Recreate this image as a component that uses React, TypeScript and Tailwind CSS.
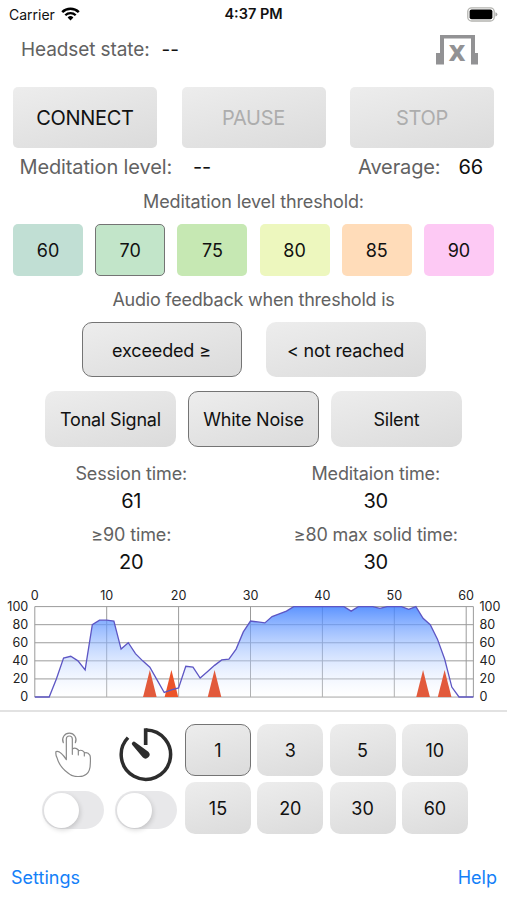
import React, { useState } from "react"
import clsx from "clsx"

const thresholds = [
  { value: 60, color: "bg-[#c1dfd4]" },
  { value: 70, color: "bg-[#c2e5c9]" },
  { value: 75, color: "bg-[#c6e8b3]" },
  { value: 80, color: "bg-[#edf7be]" },
  { value: 85, color: "bg-[#ffdcb9]" },
  { value: 90, color: "bg-[#fdc9f4]" },
]

const levels = [
  0, 0, 0, 20, 43, 45, 40, 30, 80, 85, 85, 84, 53, 60, 48, 40, 33, 19, 5, 8, 10,
  34, 33, 21, 28, 35, 41, 42, 53, 72, 84, 83, 82, 89, 92, 95, 100, 100, 100,
  100, 100, 100, 100, 100, 95, 100, 100, 100, 98, 100, 100, 100, 97, 100, 87,
  80, 64, 42, 11, 0, 0, 0,
]

const markers = [16, 19, 25, 54, 57]

const silver = "bg-linear-165 from-[#ededed] to-[#dbdbdb]"

function WifiIcon() {
  return (
    <svg width="19" height="14" viewBox="0 0 19 14" fill="none" stroke="#000">
      <path d="M1.2 5.2a11.8 11.8 0 0 1 16.6 0" strokeWidth="2.5" />
      <path d="M4.3 8.3a7.4 7.4 0 0 1 10.4 0" strokeWidth="2.3" />
      <path d="M9.5 13.4 6.6 10.5a4.2 4.2 0 0 1 5.8 0z" fill="#000" stroke="none" />
    </svg>
  )
}

function BatteryIcon() {
  return (
    <svg width="31" height="15" viewBox="0 0 31 15">
      <rect x="0.8" y="0.8" width="26.4" height="13.2" rx="3.8" fill="none" stroke="#b4b4b0" strokeWidth="1.3" />
      <rect x="2.6" y="2.6" width="22.8" height="9.6" rx="2" />
      <path d="M28.4 5.2q2 .6 2 2.2t-2 2.2z" fill="#aaa" />
    </svg>
  )
}

function HeadsetIcon() {
  return (
    <svg width="42" height="30" viewBox="0 0 42 30" fill="#929294" className="overflow-visible">
      <path d="M4 0h35v18h3v11.5h-7V3.6H8v25.9H0V18h4z" />
      <text
        x="21"
        y="26.2"
        textAnchor="middle"
        fontFamily="DejaVu Sans"
        fontWeight="bold"
        fontSize="28"
        textLength="17"
        lengthAdjust="spacingAndGlyphs"
      >
        x
      </text>
    </svg>
  )
}

function TapIcon() {
  return (
    <svg width="38" height="46" viewBox="0 0 114 138" fill="none" stroke="#8a8a8a" strokeWidth="3.6" strokeLinecap="round" strokeLinejoin="round">
      <path d="M25 35a20 20 0 1 1 36 0" />
      <path d="M34 74V24a9 9 0 0 1 18 0v46V54q9-7 18 3v15V60q10-6 18 4v11V66q10-4 17 7 2 6 1 23 0 25-12 34-10 8-26 7Q50 136 39 126 13 107 6 80 1 70 3 62q12-5 31 24V70" />
    </svg>
  )
}

function TimerIcon() {
  return (
    <svg width="54" height="55" viewBox="0 0 162 165" fill="none" stroke="#2d2d2d">
      <path d="M80 9a74 74 0 1 1-53 23" strokeWidth="10.5" />
      <path d="M80 4v50" strokeWidth="11" />
      <path d="M40 54a6 6 0 0 1 9-8l39 28a12 12 0 1 1-17 17z" fill="#2d2d2d" stroke="none" />
    </svg>
  )
}

function LevelChart() {
  const left = 34.8
  const top = 26.6
  const bottom = 117
  const px = (i: number) => left + i * 7.19
  const py = (v: number) => bottom - v * 0.904
  const line = levels.map((v, i) => `${px(i)},${py(v)}`).join(" ")

  return (
    <svg width="507" height="130" viewBox="0 0 507 130" fontSize="12.6" fill="#222" className="block">
      <defs>
        <linearGradient id="level" x1="0" y1={top} x2="0" y2={bottom} gradientUnits="userSpaceOnUse">
          <stop offset="0" stopColor="#3f80ff" stopOpacity="0.84" />
          <stop offset="1" stopColor="#ffffff" stopOpacity="0.2" />
        </linearGradient>
      </defs>
      <g stroke="#9b9b9b">
        {[0, 20, 40, 60, 80, 100].map((v) => (
          <line key={v} x1={left} x2={px(61)} y1={py(v)} y2={py(v)} />
        ))}
        {[0, 10, 20, 30, 40, 50, 60, 61].map((t) => (
          <line key={t} x1={px(t)} x2={px(t)} y1={top} y2={bottom} />
        ))}
      </g>
      <polygon points={`${left},${bottom} ${line}`} fill="url(#level)" />
      {markers.map((t) => (
        <polygon
          key={t}
          points={`${px(t) - 6.8},${bottom} ${px(t)},${py(30)} ${px(t) + 6.8},${bottom}`}
          fill={t === 19 ? "#ec5429" : "#e25a3c"}
        />
      ))}
      <polyline points={line} fill="none" stroke="#5d56c4" strokeWidth="1.3" />
      {[0, 10, 20, 30, 40, 50, 60].map((t) => (
        <text key={t} x={px(t)} y="19.5" textAnchor="middle">
          {t}
        </text>
      ))}
      {[0, 20, 40, 60, 80, 100].map((v) => (
        <React.Fragment key={v}>
          <text x="28.3" y={py(v) + 4} textAnchor="end">
            {v}
          </text>
          <text x="479.5" y={py(v) + 4}>
            {v}
          </text>
        </React.Fragment>
      ))}
    </svg>
  )
}

function Toggle() {
  const [on, setOn] = useState(false)
  return (
    <button
      role="switch"
      aria-checked={on}
      onClick={() => setOn(!on)}
      className={clsx(
        "flex h-[38px] w-[62px] rounded-full p-[1.5px]",
        on ? "justify-end bg-[#34c759]" : "bg-[#e8e8ea]"
      )}
    >
      <span className="size-[35px] rounded-full bg-white shadow-[1px_2px_5px_rgba(0,0,0,0.16)]" />
    </button>
  )
}

function Stat({ label, value }: { label: string; value: number }) {
  return (
    <div className="flex flex-col items-center">
      <div className="h-[27px] text-[18px] leading-[28px] tracking-[-0.15px] text-[#626262]">
        {label}
      </div>
      <div className="h-[34px] text-[20px] leading-[29px] tracking-[-0.2px]">{value}</div>
    </div>
  )
}

export default function App() {
  const [threshold, setThreshold] = useState(70)
  const [feedback, setFeedback] = useState("exceeded ≥")
  const [sound, setSound] = useState("White Noise")
  const [minutes, setMinutes] = useState(1)

  return (
    <div className="h-[900px] w-[507px] overflow-hidden bg-white font-['Inter',sans-serif] text-[#111]">
      <div className="grid h-[28px] grid-cols-3 items-center px-[9px] text-[14px]">
        <div className="flex items-center gap-[6px]">
          <span>Carrier</span>
          <WifiIcon />
        </div>
        <div className="text-center text-[14.5px] font-semibold">4:37 PM</div>
        <div className="flex justify-end">
          <BatteryIcon />
        </div>
      </div>

      <div className="flex h-[44px] items-center justify-between pr-[29px] pl-[21px] text-[19px] tracking-[-0.1px]">
        <div className="flex gap-[12px] pt-px">
          <span className="text-[#626262]">Headset state:</span>
          <span>--</span>
        </div>
        <HeadsetIcon />
      </div>

      <div className="mt-[14.5px] flex justify-between px-[13px]">
        {["CONNECT", "PAUSE", "STOP"].map((it, i) => (
          <button
            key={it}
            disabled={i > 0}
            className={clsx(
              "h-[61px] w-[144px] rounded-[5px] pt-px text-[20px] tracking-[-0.3px] disabled:text-[#adadad]",
              silver
            )}
          >
            {it}
          </button>
        ))}
      </div>

      <div className="flex h-[39.5px] items-center justify-between pr-[24px] pl-[19.5px] text-[20px] tracking-[-0.13px]">
        <div className="flex gap-[21px]">
          <span className="text-[#626262]">Meditation level:</span>
          <span>--</span>
        </div>
        <div className="flex gap-[18px]">
          <span className="text-[#626262]">Average:</span>
          <span>66</span>
        </div>
      </div>

      <div className="h-[37px] text-center text-[18px] leading-[30px] tracking-[-0.12px] text-[#626262]">
        Meditation level threshold:
      </div>
      <div className="flex justify-between px-[13px]">
        {thresholds.map(({ value, color }) => (
          <button
            key={value}
            onClick={() => setThreshold(value)}
            className={clsx(
              "h-[52px] w-[70px] rounded-[5px] text-[18px]",
              color,
              threshold === value && "border border-[#747474]"
            )}
          >
            {value}
          </button>
        ))}
      </div>

      <div className="h-[46px] text-center text-[18px] leading-[47px] tracking-[-0.22px] text-[#626262]">
        Audio feedback when threshold is
      </div>
      <div className="flex justify-center gap-[24px]">
        {["exceeded ≥", "< not reached"].map((it) => (
          <button
            key={it}
            onClick={() => setFeedback(it)}
            className={clsx(
              "h-[55px] w-[160px] rounded-[10px] pt-px text-[18px] tracking-[-0.15px]",
              silver,
              feedback === it && "border border-[#747474]"
            )}
          >
            {it}
          </button>
        ))}
      </div>
      <div className="mt-[14px] flex justify-center gap-[12px]">
        {["Tonal Signal", "White Noise", "Silent"].map((it) => (
          <button
            key={it}
            onClick={() => setSound(it)}
            className={clsx(
              "h-[56px] w-[131px] rounded-[10px] pt-px text-[18px] tracking-[-0.2px]",
              silver,
              sound === it && "border border-[#747474]"
            )}
          >
            {it}
          </button>
        ))}
      </div>

      <div className="mt-[13px] grid h-[120px] grid-cols-2 content-start pr-[9px] pl-[9px]">
        <Stat label="Session time:" value={61} />
        <Stat label="Meditaion time:" value={30} />
        <Stat label="≥90 time:" value={20} />
        <Stat label="≥80 max solid time:" value={30} />
      </div>

      <LevelChart />
      <div className="h-[2px] bg-[#e2e2e2]" />

      <div className="mt-[12px] flex h-[110px] pl-[42px]">
        <div className="grid w-[143px] grid-cols-[73px_70px] grid-rows-[67px_43px]">
          <div className="flex items-start pt-[7px] pl-[13px]">
            <TapIcon />
          </div>
          <div className="flex items-start pt-[3px] pl-[4px]">
            <TimerIcon />
          </div>
          <Toggle />
          <Toggle />
        </div>
        <div className="grid grid-cols-4 gap-x-[6.3px] gap-y-[6px]">
          {[1, 3, 5, 10, 15, 20, 30, 60].map((it) => (
            <button
              key={it}
              onClick={() => setMinutes(it)}
              className={clsx(
                "h-[52px] w-[66px] rounded-[10px] text-[18px]",
                silver,
                minutes === it && "border border-[#747474]"
              )}
            >
              {it}
            </button>
          ))}
        </div>
      </div>

      <div className="mt-[30px] flex justify-between pr-[10px] pl-[11px] text-[18px] leading-[28px] text-[#1380f8]">
        <button>Settings</button>
        <button>Help</button>
      </div>
    </div>
  )
}
